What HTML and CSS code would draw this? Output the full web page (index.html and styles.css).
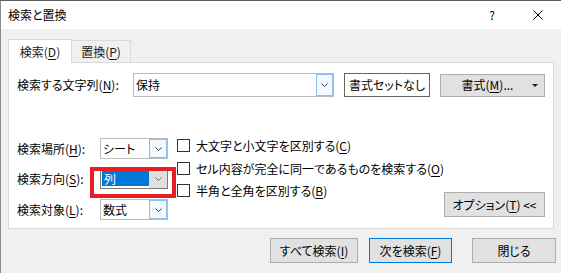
FILE: index.html
```html
<!DOCTYPE html>
<html lang="ja">
<head>
    <meta charset="UTF-8">
    <meta name="viewport" content="width=device-width, initial-scale=1.0">
    <title>検索と置換</title>
    <link rel="stylesheet" href="styles.css">
</head>
<body>
    <div class="dialog">
        <div class="titlebar">
            <span class="title">検索と置換</span>
            <span class="help">?</span>
            <span class="close">
                <svg width="10" height="10" viewBox="0 0 10 10"><path d="M0.5 0.5 L9.5 9.5 M9.5 0.5 L0.5 9.5" stroke="#000" stroke-width="1" fill="none"/></svg>
            </span>
        </div>

        <div class="content">
            <div class="tabs">
                <div class="tab active">検索(<u>D</u>)</div>
                <div class="tab">置換(<u>P</u>)</div>
            </div>

            <div class="panel">
                <div class="find-row">
                    <label class="find-label">検索する文字列(<u>N</u>):</label>
                    <div class="combo wide">
                        <span class="combo-text">保持</span>
                        <span class="arrow hot"><svg width="7" height="4" viewBox="0 0 7 4"><path d="M0.5 0.5 L3.5 3.5 L6.5 0.5" stroke="#3c3c3c" fill="none"/></svg></span>
                    </div>
                    <div class="preview">書式セットなし</div>
                    <button class="btn format">書式(<u>M</u>)...<span class="caret"></span></button>
                </div>

                <div class="lower">
                    <div class="fields">
                        <div class="field">
                            <label>検索場所(<u>H</u>):</label>
                            <div class="combo small">
                                <span class="combo-text">シート</span>
                                <span class="arrow hot"><svg width="7" height="4" viewBox="0 0 7 4"><path d="M0.5 0.5 L3.5 3.5 L6.5 0.5" stroke="#3c3c3c" fill="none"/></svg></span>
                            </div>
                        </div>
                        <div class="field">
                            <label>検索方向(<u>S</u>):</label>
                            <div class="combo small focus">
                                <span class="sel">列</span>
                                <span class="arrow flat"><svg width="7" height="4" viewBox="0 0 7 4"><path d="M0.5 0.5 L3.5 3.5 L6.5 0.5" stroke="#6d6d6d" fill="none"/></svg></span>
                                <span class="mark"></span>
                            </div>
                        </div>
                        <div class="field">
                            <label>検索対象(<u>L</u>):</label>
                            <div class="combo small">
                                <span class="combo-text">数式</span>
                                <span class="arrow hot"><svg width="7" height="4" viewBox="0 0 7 4"><path d="M0.5 0.5 L3.5 3.5 L6.5 0.5" stroke="#3c3c3c" fill="none"/></svg></span>
                            </div>
                        </div>
                    </div>

                    <div class="checks">
                        <div class="check"><span class="box"></span>大文字と小文字を区別する(<u>C</u>)</div>
                        <div class="check"><span class="box"></span>セル内容が完全に同一であるものを検索する(<u>O</u>)</div>
                        <div class="check"><span class="box"></span>半角と全角を区別する(<u>B</u>)</div>
                    </div>

                    <button class="btn options">オプション(<u>T</u>) &lt;&lt;</button>
                </div>
            </div>

            <div class="footer">
                <button class="btn find-all">すべて検索(<u>I</u>)</button>
                <button class="btn find-next">次を検索(<u>F</u>)</button>
                <button class="btn close-btn">閉じる</button>
            </div>
        </div>
    </div>
</body>
</html>
```

FILE: styles.css
```css
* {
    box-sizing: border-box;
}
html, body {
    margin: 0;
}
body {
    width: 561px;
    height: 273px;
    overflow: hidden;
    background-color: #f0f0f0;
    color: #000000;
    font-family: "Noto Sans CJK JP", "Noto Sans", sans-serif;
    font-size: 12px;
    line-height: 16px;
    font-feature-settings: "palt";
}
u {
    text-underline-offset: 2px;
}
.dialog {
    height: 273px;
    border-top: 1px solid #5c5c5c;
    border-left: 1px solid #8c8c8c;
}

/* title bar */
.titlebar {
    height: 28px;
    background-color: #ffffff;
    display: flex;
    align-items: center;
    padding-left: 7px;
}
.title {
    flex: 1;
}
.help {
    width: 46px;
    text-align: center;
}
.close {
    width: 46px;
    display: flex;
    justify-content: center;
}

.content {
    padding: 10px 7px 0 7px;
}

/* tabs */
.tabs {
    display: flex;
    height: 23px;
}
.tab {
    height: 22px;
    margin-top: 1px;
    width: 59px;
    border: 1px solid #d9d9d9;
    border-left: none;
    border-bottom: none;
    background-color: #f0f0f0;
    display: flex;
    align-items: center;
    justify-content: center;
    color: #1a1a1a;
}
.tab.active {
    width: 64px;
    height: 24px;
    margin-top: 0;
    border-left: 1px solid #d9d9d9;
    background-color: #ffffff;
    position: relative;
    z-index: 1;
}

/* panel */
.panel {
    height: 167px;
    background-color: #ffffff;
    border: 1px solid #d9d9d9;
    padding: 10px 8px 0 8px;
}
.find-row {
    display: flex;
    align-items: center;
    height: 24px;
}
.find-row > * {
    flex-shrink: 0;
}
.find-label {
    width: 116px;
}
.combo {
    display: flex;
    align-items: stretch;
    border: 1px solid #bcbcbc;
    background-color: #ffffff;
    position: relative;
}
.combo.wide {
    width: 201px;
    height: 24px;
}
.combo.small {
    width: 68px;
    height: 21px;
}
.combo.focus {
    border-color: #7a7a7a;
}
.combo-text {
    flex: 1;
    padding-left: 2px;
    display: flex;
    align-items: center;
}
.sel {
    flex: 1;
    margin: 2px 0 2px 1px;
    padding-left: 2px;
    background-color: #0078d7;
    color: #ffffff;
    display: flex;
    align-items: center;
}
.arrow {
    width: 17px;
    display: flex;
    align-items: center;
    justify-content: center;
}
.combo.small .arrow {
    width: 18px;
}
.arrow.hot {
    border: 1px solid #8dbde9;
    background-color: #f3f9fe;
}
.arrow.flat {
    background-color: #e0e0e0;
}
.mark {
    position: absolute;
    left: -11px;
    top: -2px;
    width: 86px;
    height: 31px;
    border: 4px solid #e81e25;
}
.preview {
    margin-left: 10px;
    width: 86px;
    height: 24px;
    border: 1px solid #646464;
    display: flex;
    align-items: center;
    justify-content: center;
}

/* buttons */
.btn {
    font-family: inherit;
    font-size: 12px;
    line-height: 16px;
    font-feature-settings: "palt";
    color: #000000;
    background-color: #e1e1e1;
    border: 1px solid #adadad;
    padding: 0;
    display: flex;
    align-items: center;
    justify-content: center;
}
.btn.format {
    margin-left: 10px;
    width: 105px;
    height: 23px;
    position: relative;
    padding-right: 10px;
}
.caret {
    position: absolute;
    right: 6px;
    top: 9px;
    border-left: 3px solid transparent;
    border-right: 3px solid transparent;
    border-top: 3px solid #1e1e1e;
}

/* lower part */
.lower {
    display: flex;
    margin-top: 41px;
}
.fields {
    display: flex;
    flex-direction: column;
}
.field {
    display: flex;
    align-items: center;
    height: 21px;
}
.field + .field {
    margin-top: 9px;
}
.field:last-child {
    margin-top: 10px;
}
.field label {
    width: 83px;
}
.checks {
    margin-left: 9px;
    padding-top: 1px;
}
.check {
    display: flex;
    align-items: center;
    height: 13px;
    white-space: nowrap;
}
.check + .check {
    margin-top: 10px;
}
.check:last-child {
    margin-top: 9px;
}
.box {
    width: 13px;
    height: 13px;
    border: 1px solid #333333;
    background-color: #ffffff;
    margin-right: 6px;
}
.btn.options {
    margin-left: auto;
    margin-top: 54px;
    width: 104px;
    height: 25px;
}

/* footer */
.footer {
    display: flex;
    justify-content: flex-end;
    margin-top: 9px;
    margin-right: -2px;
}
.footer .btn {
    height: 25px;
}
.find-all {
    width: 88px;
}
.btn.find-next {
    width: 83px;
    margin-left: 11px;
    border-color: #0078d7;
}
.close-btn {
    width: 84px;
    margin-left: 20px;
}
```
